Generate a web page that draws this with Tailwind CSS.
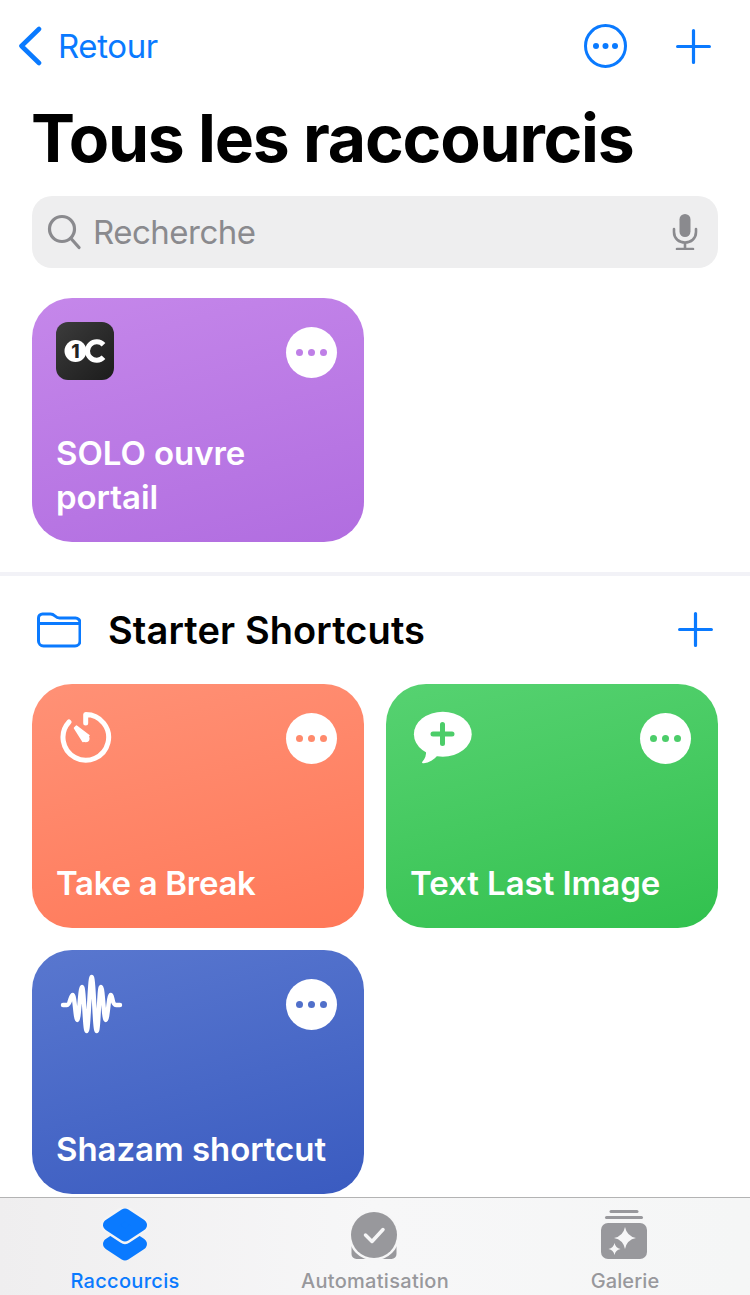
<!DOCTYPE html>
<html lang="fr">
<head>
<meta charset="utf-8">
<script src="https://cdn.jsdelivr.net/npm/@tailwindcss/browser@4"></script>
</head>
<body class="bg-white">
<div class="w-[750px] h-[1295px] flex flex-col overflow-hidden font-['Inter','Liberation_Sans',sans-serif] text-black">
  <main class="flex-1 min-h-0 overflow-hidden">
    <nav class="h-[92px] pl-[18px] pr-[39px] flex items-center justify-between text-[#0a7aff]">
      <div class="flex items-center gap-[15px]">
        <svg width="25" height="40" viewBox="0 0 25 40" fill="none" stroke="currentColor" stroke-width="4.6" stroke-linecap="round" stroke-linejoin="round"><path d="M21 3 3.500 20 21 37"/></svg>
        <span class="text-[33px] leading-none tracking-[-0.4px]">Retour</span>
      </div>
      <div class="flex items-center gap-[49px]">
        <svg width="43" height="44" viewBox="0 0 43 44" fill="currentColor"><ellipse cx="21.500" cy="22" rx="20" ry="20.400" fill="none" stroke="currentColor" stroke-width="3"/><circle cx="12" cy="22" r="3"/><circle cx="21.500" cy="22" r="3"/><circle cx="31" cy="22" r="3"/></svg>
        <svg width="35" height="35" viewBox="0 0 35 35" fill="none" stroke="currentColor" stroke-width="3.2" stroke-linecap="round"><path d="M17.500 1.600v31.800M1.600 17.500h31.800"/></svg>
      </div>
    </nav>
    <h1 class="ml-[31px] h-[104px] text-[66px] leading-[92px] font-bold tracking-[-1.2px] whitespace-nowrap">Tous les raccourcis</h1>
    <div class="mx-[32px] h-[72px] rounded-[20px] bg-[#eeeeef] pl-[15px] pr-[20px] flex items-center text-[#8a8a8e]">
      <svg width="34" height="36" viewBox="0 0 34 36" fill="none" stroke="currentColor" stroke-width="3.2" stroke-linecap="round"><circle cx="15" cy="15" r="12.500"/><path d="m24 24.500 8 9"/></svg>
      <span class="ml-[12px] text-[33px] leading-none tracking-[-0.5px]">Recherche</span>
      <svg class="ml-auto" width="26" height="36" viewBox="0 0 26 36" fill="none" stroke="currentColor" stroke-width="2.6" stroke-linecap="round"><rect x="7.500" y="0" width="11" height="23" rx="5.500" fill="currentColor" stroke="none"/><path d="M2 15v3c0 6.500 5 10.500 11 10.500S24 24.500 24 18v-3M13 28.500V35M5 35h16"/></svg>
    </div>

    <section class="px-[32px] pt-[30px] pb-[30px] grid grid-cols-2 gap-[22px]">
      <article class="h-[244px] rounded-[40px] bg-linear-165 from-[#c587ea] to-[#b16de0] pl-[24px] pr-[27px] pt-[24px] pb-[23px] flex flex-col justify-between">
        <div class="flex items-start justify-between">
          <div class="w-[58px] h-[58px] rounded-[12px] bg-gradient-to-br from-[#3c3c3c] to-[#1c1c1c] flex items-center justify-center">
            <svg width="44" height="26" viewBox="0 0 44 26"><circle cx="12.500" cy="13" r="11" fill="#fff"/><text x="12.500" y="20" text-anchor="middle" font-size="19" font-weight="800" fill="#222" font-family="Inter">1</text><path d="M40.500 6.800A9.200 9.200 0 1 0 40.500 19.200" fill="none" stroke="#fff" stroke-width="5"/></svg>
          </div>
          <div class="w-[51px] h-[51px] mt-[5px] rounded-full bg-white flex items-center justify-center gap-[5px]"><i class="w-[7px] h-[7px] rounded-full bg-[#bf7fe7]"></i><i class="w-[7px] h-[7px] rounded-full bg-[#bf7fe7]"></i><i class="w-[7px] h-[7px] rounded-full bg-[#bf7fe7]"></i></div>
        </div>
        <p class="text-white text-[33px] leading-[44px] font-[560] tracking-[-0.05px]">SOLO ouvre<br>portail</p>
      </article>
    </section>

    <div class="h-[4px] bg-[#f2f2f7]"></div>

    <header class="h-[108px] pl-[37px] pr-[37px] flex items-center">
      <svg width="44" height="36" viewBox="0 0 44 36" fill="none" stroke="#0a7aff" stroke-width="3"><path d="M1.500 9V6a4 4 0 0 1 4-4h8c2 0 3 .6 4.500 2 1.300 1.300 2.400 2 4.500 2h16a4.500 4.500 0 0 1 4.500 4.500V29a5 5 0 0 1-5 5H6.500a5 5 0 0 1-5-5V9Zm0 2.500h41"/></svg>
      <h2 class="ml-[27px] text-[38px] leading-none font-semibold tracking-[0.1px]">Starter Shortcuts</h2>
      <svg class="ml-auto -mt-[2px]" width="35" height="35" viewBox="0 0 35 35" fill="none" stroke="#0a7aff" stroke-width="3.200" stroke-linecap="round"><path d="M17.500 1.600v31.800M1.600 17.500h31.800"/></svg>
    </header>

    <section class="px-[32px] grid grid-cols-2 gap-[22px]">
      <article class="h-[244px] rounded-[40px] bg-linear-165 from-[#ff9176] to-[#ff7858] pl-[24px] pr-[27px] pt-[24px] pb-[23px] flex flex-col justify-between">
        <div class="flex items-start justify-between">
          <svg width="58" height="58" viewBox="0 0 58 58" fill="none" stroke="#fff" stroke-width="5" stroke-linecap="round" stroke-linejoin="round"><path d="M29.700 15V6.600A22.800 22.800 0 1 1 13 14"/><path d="M18.500 20 20.500 18 33 27.500 27 33.500Z" fill="#fff" stroke-width="1.500"/><circle cx="29.700" cy="30.500" r="3.800" fill="#fff" stroke="none"/></svg>
          <div class="w-[51px] h-[51px] mt-[5px] rounded-full bg-white flex items-center justify-center gap-[5px]"><i class="w-[7px] h-[7px] rounded-full bg-[#ff8a6c]"></i><i class="w-[7px] h-[7px] rounded-full bg-[#ff8a6c]"></i><i class="w-[7px] h-[7px] rounded-full bg-[#ff8a6c]"></i></div>
        </div>
        <p class="text-white text-[33px] leading-[44px] font-[560] tracking-[-0.3px]">Take a Break</p>
      </article>
      <article class="h-[244px] rounded-[40px] bg-linear-165 from-[#56d271] to-[#31c14e] pl-[24px] pr-[27px] pt-[24px] pb-[23px] flex flex-col justify-between">
        <div class="flex items-start justify-between">
          <svg width="64" height="58" viewBox="0 0 64 58"><ellipse cx="32.800" cy="26.200" rx="28.900" ry="22.500" fill="#fff"/><path d="M16 42C16.500 47 15 51 12.500 53.500 11.500 54.800 12.300 55.500 13.800 55.300 19 54.800 24 52 28 47Z" fill="#fff"/><path d="M32.500 16.500v19M23 26h19" stroke="#4ccd69" stroke-width="5" stroke-linecap="round"/></svg>
          <div class="w-[51px] h-[51px] mt-[5px] rounded-full bg-white flex items-center justify-center gap-[5px]"><i class="w-[7px] h-[7px] rounded-full bg-[#4ccd69]"></i><i class="w-[7px] h-[7px] rounded-full bg-[#4ccd69]"></i><i class="w-[7px] h-[7px] rounded-full bg-[#4ccd69]"></i></div>
        </div>
        <p class="text-white text-[33px] leading-[44px] font-[560] tracking-[-0.05px]">Text Last Image</p>
      </article>
      <article class="h-[244px] rounded-[40px] bg-linear-165 from-[#5977cf] to-[#3a5bc0] pl-[24px] pr-[27px] pt-[24px] pb-[23px] flex flex-col justify-between">
        <div class="flex items-start justify-between">
          <svg width="70" height="60" viewBox="0 0 70 60" fill="none" stroke="#fff" stroke-width="4.400" stroke-linecap="round" stroke-linejoin="round"><path d="M7 31H11C14 31 14.700 21 16.700 21S19.500 46 21.300 46 24 13 26 13 28.800 57 30.700 57 33.700 3 35.700 3 38.700 57 40.700 57 43 13 45 13 47.700 46 49.700 46 52.700 21 54.700 21 56 31 60 31H64"/></svg>
          <div class="w-[51px] h-[51px] mt-[5px] rounded-full bg-white flex items-center justify-center gap-[5px]"><i class="w-[7px] h-[7px] rounded-full bg-[#5170ca]"></i><i class="w-[7px] h-[7px] rounded-full bg-[#5170ca]"></i><i class="w-[7px] h-[7px] rounded-full bg-[#5170ca]"></i></div>
        </div>
        <p class="text-white text-[33px] leading-[44px] font-[560] tracking-[-0.05px]">Shazam shortcut</p>
      </article>
    </section>
  </main>

  <footer class="h-[98px] shrink-0 border-t border-[#b3b3b3] bg-gradient-to-r from-[#efeeef] via-[#f7f7f8] to-[#f5f6f6] grid grid-cols-3">
    <div class="flex flex-col items-center text-[#0a7aff]">
      <svg class="mt-[10px]" width="50" height="54" viewBox="0 0 50 54" fill="currentColor" stroke-linejoin="round"><path d="M25 25.500 41 36 25 46.500 9 36Z" stroke="currentColor" stroke-width="12"/><path d="M25 6.500 41 17 25 27.500 9 17Z" stroke="#f4f4f5" stroke-width="17"/><path d="M25 6.500 41 17 25 27.500 9 17Z" stroke="currentColor" stroke-width="12"/></svg>
      <span class="mt-[7px] text-[20px] leading-[24px] font-medium tracking-[0.3px]">Raccourcis</span>
    </div>
    <div class="flex flex-col items-center text-[#98989c]">
      <svg class="mt-[14px] -ml-[2px]" width="46" height="48" viewBox="0 0 46 48" fill="currentColor"><path d="M4.500 31a25 25 0 0 0 37 0l4 3v8a5 5 0 0 1-5 5h-35a5 5 0 0 1-5-5v-8Z" /><circle cx="23" cy="23" r="25.500" fill="#f6f6f7"/><circle cx="23" cy="23" r="23"/><path d="m14.500 23 6.500 6.500 11-12" fill="none" stroke="#f6f6f7" stroke-width="3.500" stroke-linecap="round" stroke-linejoin="round"/></svg>
      <span class="mt-[9px] text-[20px] leading-[24px] font-medium tracking-[0.3px]">Automatisation</span>
    </div>
    <div class="flex flex-col items-center text-[#98989c]">
      <svg class="mt-[12px] -ml-[2px]" width="48" height="50" viewBox="0 0 48 50" fill="currentColor"><rect x="9.500" y="0" width="29" height="3" rx="1.500"/><rect x="5" y="6" width="38" height="3" rx="1.500"/><rect x="1" y="13" width="46" height="36" rx="7"/><path d="M25 17Q26.800 26.200 36 28 26.800 29.800 25 39 23.200 29.800 14 28 23.200 26.200 25 17ZM14.500 33Q15.500 38 20.500 39 15.500 40 14.500 45 13.500 40 8.500 39 13.500 38 14.500 33Z" fill="#f6f6f7"/></svg>
      <span class="mt-[9px] text-[20px] leading-[24px] font-medium tracking-[0.1px]">Galerie</span>
    </div>
  </footer>
</div>
</body>
</html>
